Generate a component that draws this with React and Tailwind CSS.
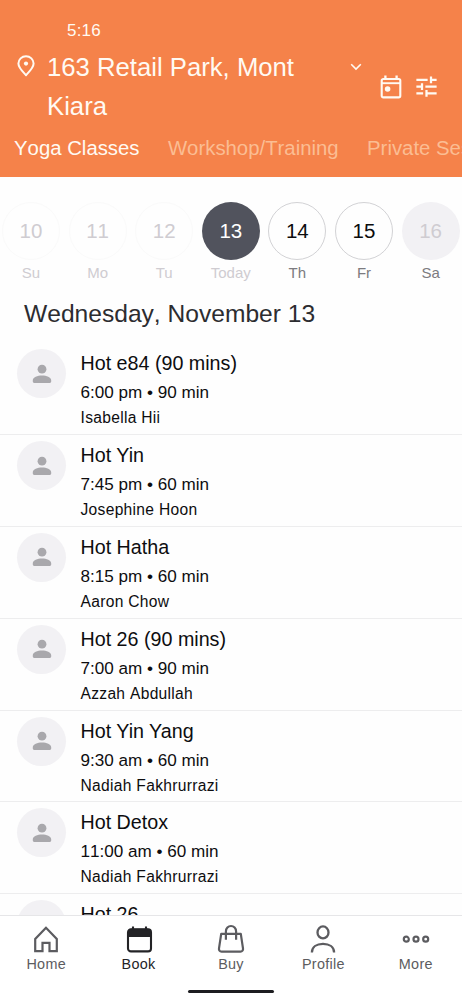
import React, { useState } from 'react';
import { MdTune } from 'react-icons/md';

const CATEGORIES = ['Yoga Classes', 'Workshop/Training', 'Private Sessions'];

const DAYS = [
  { date: 10, label: 'Su', status: 'past' },
  { date: 11, label: 'Mo', status: 'past' },
  { date: 12, label: 'Tu', status: 'past' },
  { date: 13, label: 'Today', status: 'selected' },
  { date: 14, label: 'Th', status: 'open' },
  { date: 15, label: 'Fr', status: 'open' },
  { date: 16, label: 'Sa', status: 'closed' },
];

const DAY_STYLES = {
  past: { circle: 'border border-[#fafafa] text-[#cfccd1]', label: 'text-[#cfccd1]' },
  selected: { circle: 'bg-[#51535d] text-white', label: 'text-[#cfccd1]' },
  open: { circle: 'border border-[#d2d2d5] text-[#0c0c0e]', label: 'text-[#7c7b80]' },
  closed: { circle: 'bg-[#f2f1f4] text-[#cfccd1]', label: 'text-[#7c7b80]' },
};

const CLASSES = [
  { name: 'Hot e84 (90 mins)', time: '6:00 pm', duration: 90, teacher: 'Isabella Hii' },
  { name: 'Hot Yin', time: '7:45 pm', duration: 60, teacher: 'Josephine Hoon' },
  { name: 'Hot Hatha', time: '8:15 pm', duration: 60, teacher: 'Aaron Chow' },
  { name: 'Hot 26 (90 mins)', time: '7:00 am', duration: 90, teacher: 'Azzah Abdullah' },
  { name: 'Hot Yin Yang', time: '9:30 am', duration: 60, teacher: 'Nadiah Fakhrurrazi' },
  { name: 'Hot Detox', time: '11:00 am', duration: 60, teacher: 'Nadiah Fakhrurrazi' },
  { name: 'Hot 26' },
];

function PinIcon() {
  return (
    <svg width="18" height="22" viewBox="0 0 18 22" fill="none" stroke="currentColor" strokeWidth="2">
      <path d="M9 20.2C6.2 17.2 1.4 12.9 1.4 8.6a7.6 7.4 0 0 1 15.2 0c0 4.3-4.8 8.6-7.6 11.6Z" strokeLinejoin="round" />
      <circle cx="9" cy="8.6" r="2.1" fill="currentColor" stroke="none" />
    </svg>
  );
}

function TodayIcon() {
  return (
    <svg width="22" height="24" viewBox="0 0 22 24" fill="none" stroke="currentColor" strokeWidth="2.1">
      <rect x="1.7" y="4" width="18.6" height="18.4" rx="1.6" />
      <path d="M1.8 8.2h18.4" strokeWidth="1.9" />
      <path d="M5.4 .6v4M16.6 .6v4" strokeWidth="2.3" />
      <circle cx="7.6" cy="14" r="2.8" fill="currentColor" stroke="none" />
    </svg>
  );
}

function PersonIcon() {
  return (
    <svg width="20" height="20" viewBox="0 0 20 20" fill="#a9a8ac">
      <circle cx="10" cy="5.2" r="4.4" />
      <path d="M.8 16.2c0-3 4.7-4.8 9.2-4.8s9.2 1.8 9.2 4.8v1.4c0 .8-.6 1.3-1.3 1.3H2.1c-.7 0-1.3-.5-1.3-1.3Z" />
    </svg>
  );
}

function HomeIcon() {
  return (
    <svg width="28" height="30" viewBox="0 0 28 30" fill="none" stroke="currentColor" strokeWidth="2.2">
      <path d="M14 3.8 3.2 15v12.2h7.3v-8.4h7v8.4h7.3V15Z" />
    </svg>
  );
}

function BookIcon() {
  return (
    <svg width="28" height="30" viewBox="0 0 28 30" fill="none" stroke="currentColor" strokeWidth="2.1">
      <rect x="3" y="5.4" width="23" height="22" rx="3" />
      <path d="M3 8a3.2 3.2 0 0 1 3.2-3.2h16.6A3.2 3.2 0 0 1 26 8v5H3Z" fill="currentColor" stroke="none" />
      <path d="M8 2.4v4M21 2.4v4" />
    </svg>
  );
}

function BagIcon() {
  return (
    <svg width="28" height="30" viewBox="0 0 28 30" fill="none" stroke="currentColor" strokeWidth="2.2">
      <path d="M4.2 9.8h19.6l2.2 14.6c.3 1.8-.8 3.2-2.5 3.2h-19c-1.7 0-2.8-1.4-2.5-3.2Z" strokeLinejoin="round" />
      <path d="M8.9 15.8V7.4a5.1 5.4 0 0 1 10.2 0v8.4" />
    </svg>
  );
}

function ProfileIcon() {
  return (
    <svg width="28" height="30" viewBox="0 0 28 30" fill="none" stroke="currentColor" strokeWidth="2.3">
      <ellipse cx="14" cy="8.4" rx="5.5" ry="6" />
      <path d="M2.9 28.4c0-5.4 4.6-8.6 11.1-8.6s11.1 3.2 11.1 8.6" />
    </svg>
  );
}

function MoreIcon() {
  return (
    <svg width="28" height="30" viewBox="0 0 28 30" fill="none" stroke="currentColor" strokeWidth="2.2">
      <circle cx="4.3" cy="15.2" r="2.5" />
      <circle cx="14" cy="15.2" r="2.5" />
      <circle cx="23.7" cy="15.2" r="2.5" />
    </svg>
  );
}

const NAV_ITEMS = [
  { label: 'Home', Icon: HomeIcon },
  { label: 'Book', Icon: BookIcon },
  { label: 'Buy', Icon: BagIcon },
  { label: 'Profile', Icon: ProfileIcon },
  { label: 'More', Icon: MoreIcon },
];

function Header({ category, onSelect }) {
  return (
    <header className="h-[177px] shrink-0 bg-[#f5824a] text-[#fffaf3] overflow-hidden">
      <div className="h-12 pt-[21px] pl-[67px] text-[17px] leading-5 tracking-[0.2px]">5:16</div>
      <div className="h-[77px] flex items-start">
        <div className="w-[47px] pl-[17px] pt-[7px] shrink-0">
          <PinIcon />
        </div>
        <h1 className="w-[300px] text-[25.7px] leading-[38.5px]">163 Retail Park, Mont Kiara</h1>
        <svg className="mt-[15px] ml-[3px] shrink-0" width="12" height="8" viewBox="0 0 12 8" fill="none" stroke="currentColor" strokeWidth="1.6">
          <path d="m1.2 1.2 4.8 4.8 4.8-4.8" />
        </svg>
        <div className="mt-[25px] ml-[18px] flex items-center gap-[11px]">
          <TodayIcon />
          <MdTune className="size-[27px]" />
        </div>
      </div>
      <nav className="mt-[9px] pl-[14px] flex gap-[28.4px] whitespace-nowrap text-[20.35px] leading-7">
        {CATEGORIES.map((item) => (
          <button
            key={item}
            onClick={() => onSelect(item)}
            className={item === category ? 'shrink-0' : 'shrink-0 text-[#fbbd93]'}
          >
            {item}
          </button>
        ))}
      </nav>
    </header>
  );
}

function DayPicker() {
  return (
    <div className="shrink-0 pt-[24.5px] pl-[2px] flex gap-[8.6px]">
      {DAYS.map((day) => (
        <div key={day.date} className="w-[58px] shrink-0 flex flex-col items-center">
          <div className={`size-[58px] pt-px rounded-full flex items-center justify-center text-[20.5px] ${DAY_STYLES[day.status].circle}`}>
            {day.date}
          </div>
          <span className={`mt-[3px] text-[15px] leading-5 [font-kerning:normal] ${DAY_STYLES[day.status].label}`}>{day.label}</span>
        </div>
      ))}
    </div>
  );
}

function ClassRow({ item }) {
  return (
    <li className="h-[91.85px] shrink-0 flex border-b border-[#ededee] pl-[17px]">
      <div className="mt-[6px] size-[49px] shrink-0 rounded-full bg-[#f2f1f4] flex items-center justify-center">
        <PersonIcon />
      </div>
      <div className="ml-[14.5px] pt-2 text-[#0d0d0f]">
        <h3 className="text-[19.7px] leading-6 [font-kerning:normal]">{item.name}</h3>
        {item.time && (
          <>
            <p className="mt-[7px] text-[17.1px] leading-[22px]">{item.time} • {item.duration} min</p>
            <p className="mt-1 text-[15.6px] leading-5 tracking-[0.3px]">{item.teacher}</p>
          </>
        )}
      </div>
    </li>
  );
}

function BottomNav() {
  return (
    <footer className="h-[85px] shrink-0 border-t border-[#e6e6e8] bg-white flex flex-col">
      <nav className="flex pt-2">
        {NAV_ITEMS.map(({ label, Icon }) => (
          <button
            key={label}
            className={`flex-1 flex flex-col items-center ${label === 'Book' ? 'text-[#232326]' : 'text-[#5c5c60]'}`}
          >
            <Icon />
            <span className="text-[14.4px] leading-5 tracking-[0.3px]">{label}</span>
          </button>
        ))}
      </nav>
      <div className="mt-auto mb-[7px] mx-auto h-[3px] w-[86px] rounded-full bg-[#1d1d20]" />
    </footer>
  );
}

export default function App() {
  const [category, setCategory] = useState('Yoga Classes');

  return (
    <div className="w-[462px] h-[1000px] flex flex-col overflow-hidden bg-[#fefefe] font-['Liberation_Sans',Arial,sans-serif] [font-kerning:none]">
      <Header category={category} onSelect={setCategory} />
      <DayPicker />
      {/* Schedule */}
      <main className="flex-1 min-h-0 overflow-hidden flex flex-col">
        <h2 className="mt-[15.7px] pl-[24px] h-[45px] shrink-0 text-[24.6px] leading-8 text-[#2c2c30]">
          Wednesday, November 13
        </h2>
        <ul className="flex flex-col">
          {CLASSES.map((item) => (
            <ClassRow key={item.name} item={item} />
          ))}
        </ul>
      </main>
      <BottomNav />
    </div>
  );
}
